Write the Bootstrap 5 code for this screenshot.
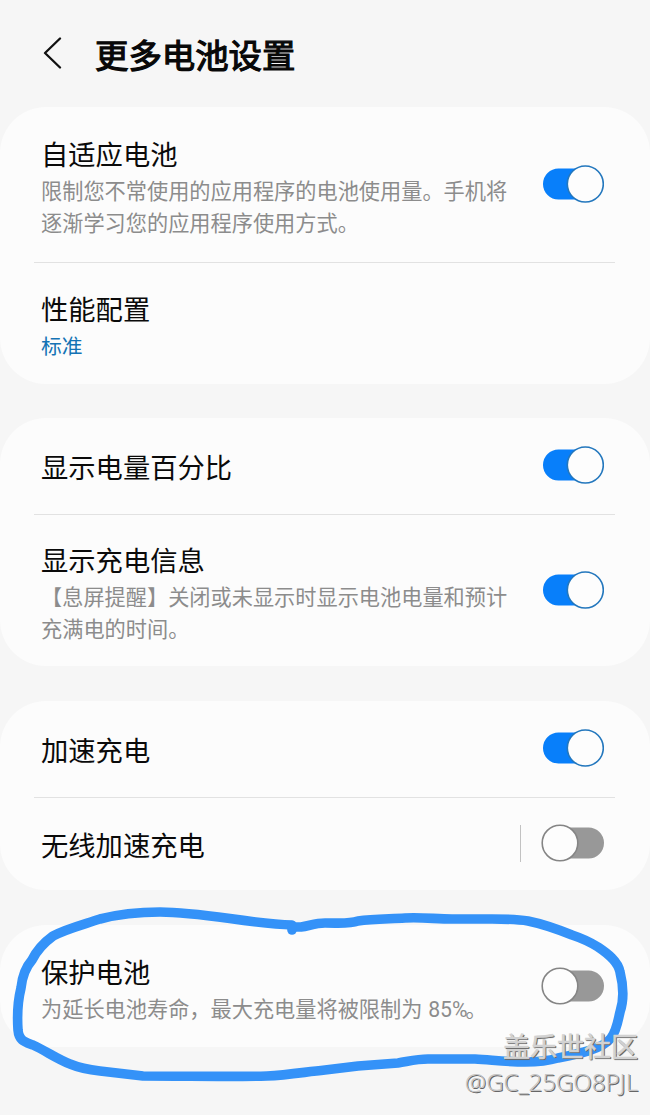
<!DOCTYPE html>
<html lang="zh-CN">
<head>
<meta charset="utf-8">
<meta name="viewport" content="width=device-width, initial-scale=1">
<title>更多电池设置</title>
<link href="https://cdn.jsdelivr.net/npm/bootstrap@5.3.0/dist/css/bootstrap.min.css" rel="stylesheet">
<style>
body { background: #f6f6f6; font-family: "Noto Sans CJK SC", sans-serif; color: #0a0a0a; }
.screen { width: 650px; height: 1115px; }
.topbar { height: 107px; padding: 0 0 0 42px; }
.topbar h1 { font-size: 33.4px; line-height: 44px; font-weight: 400; -webkit-text-stroke: 1.2px #080808; margin: 0 0 0 32px; color: #080808; }
.group { --bs-card-bg: #fcfcfc; --bs-card-border-width: 0; --bs-card-border-radius: 46px; color: inherit; margin-bottom: 35px; }
.group-first { margin-bottom: 34px; }
.setting { padding: 27px 46px 24px 41px; }
.setting .toggle { margin-top: -5px; }
.setting-single { padding-top: 0; padding-bottom: 0; height: 96px; }
.setting-single .toggle { margin-top: -2px; }
.setting-last { padding-top: 29px; padding-bottom: 22px; }
.rule { height: 1px; margin: 0 35px 0 34px; background: #e2e2e2; }
.name { font-size: 27.3px; line-height: 36px; font-weight: 400; margin: 0; }
.note { font-size: 21.2px; line-height: 32px; margin: 3px 0 0; color: #8c8c8c; white-space: nowrap; }
.note-value { color: #1473b5; font-size: 20.8px; }
.latin { font-family: Roboto, sans-serif; margin: 0 -2px 0 1px; }
.toggle { width: 63px; height: 38px; }
.split { width: 1px; height: 37px; background: #c2c2c2; margin: -2px 20px 0 0; }
.pen { left: 0; top: 895px; pointer-events: none; }
.stamp { right: 12px; top: 1028px; line-height: 36px; color: #d2d2d2; text-shadow: 1px 1px 0 #666, 1px 1px 1px #777; }
.stamp-site { font-size: 27px; font-weight: 400; -webkit-text-stroke: .6px #d2d2d2; }
.stamp-user { font-family: "Noto Sans", sans-serif; font-weight: 300; font-size: 24px; line-height: 35px; color: #c4c4c4; text-shadow: 1px 1px 0 #666; }
</style>
</head>
<body>
<svg width="0" height="0" class="position-absolute">
  <symbol id="on" viewBox="0 0 63 38"><rect x="2" y="3.5" width="60" height="31" rx="15.5" fill="#087ffa"/><circle cx="44.3" cy="19" r="18" fill="#fdfdfd" stroke="#2377bd" stroke-width="1.6"/></symbol>
  <symbol id="off" viewBox="0 0 63 38"><rect x="3" y="3.5" width="60" height="31" rx="15.5" fill="#989898"/><circle cx="19" cy="19" r="17.8" fill="#fdfdfd" stroke="#858585" stroke-width="1.6"/></symbol>
</svg>
<main class="screen position-relative overflow-hidden">
  <header class="topbar d-flex align-items-center">
    <svg width="21" height="34" viewBox="0 0 21 34" fill="none" stroke="#111" stroke-width="2.3" stroke-linecap="round" stroke-linejoin="round"><path d="M18 1.5 3 16l15 14.5"/></svg>
    <h1>更多电池设置</h1>
  </header>

  <section class="card group group-first">
    <div class="setting d-flex align-items-center justify-content-between" style="height:155px">
      <div><h2 class="name">自适应电池</h2><p class="note">限制您不常使用的应用程序的电池使用量。手机将<br>逐渐学习您的应用程序使用方式。</p></div>
      <svg class="toggle flex-shrink-0"><use href="#on"/></svg>
    </div>
    <div class="rule"></div>
    <div class="setting" style="height:121px"><h2 class="name">性能配置</h2><p class="note note-value">标准</p></div>
  </section>

  <section class="card group">
    <div class="setting setting-single d-flex align-items-center justify-content-between">
      <h2 class="name">显示电量百分比</h2>
      <svg class="toggle flex-shrink-0"><use href="#on"/></svg>
    </div>
    <div class="rule"></div>
    <div class="setting d-flex align-items-center justify-content-between" style="height:151px">
      <div><h2 class="name">显示充电信息</h2><p class="note">【息屏提醒】关闭或未显示时显示电池电量和预计<br>充满电的时间。</p></div>
      <svg class="toggle flex-shrink-0"><use href="#on"/></svg>
    </div>
  </section>

  <section class="card group">
    <div class="setting setting-single d-flex align-items-center justify-content-between">
      <h2 class="name">加速充电</h2>
      <svg class="toggle flex-shrink-0"><use href="#on"/></svg>
    </div>
    <div class="rule"></div>
    <div class="setting setting-single d-flex align-items-center" style="height:92px">
      <h2 class="name me-auto">无线加速充电</h2>
      <span class="split"></span>
      <svg class="toggle flex-shrink-0"><use href="#off"/></svg>
    </div>
  </section>

  <section class="card group mb-0">
    <div class="setting setting-last d-flex align-items-center justify-content-between" style="height:122px">
      <div><h2 class="name">保护电池</h2><p class="note">为延长电池寿命，最大充电量将被限制为 <span class="latin">85%</span>。</p></div>
      <svg class="toggle flex-shrink-0" style="margin-top:-7px"><use href="#off"/></svg>
    </div>
  </section>

  <svg class="pen position-absolute" width="650" height="200" viewBox="0 895 650 200" fill="none" stroke="#3492f8" stroke-width="9.6" stroke-linecap="round" stroke-linejoin="round">
    <path d="M292 925C250 924 203 912 160 912C138 912 119 914 100 919C82 925 66 929 53 936C42 944 36 952 32 960C25 968 22 978 21 988C18 1000 17 1015 18 1030C19 1041 25 1042 33 1045C46 1051 57 1059 70 1064C82 1069 91 1070 100 1071L143 1076C190 1076 230 1077 267 1076C288 1075 305 1072 325 1070L358 1066L398 1063C410 1061 417 1059 428 1059H475C492 1060 508 1062 525 1062C538 1062 548 1061 558 1058C578 1054 603 1049 611 1038C617 1030 618 1020 620 1012C624 1000 623 984 620 972C618 961 607 953 598 947C590 942 581 938 572 935C557 929 543 924 528 921C516 919 504 919 492 919H452C436 919 421 917 405 918C390 919 373 919 358 921C350 924 342 923 325 923C315 923 309 926 301 927H292"/>
    <path d="M292 926V930"/>
  </svg>

  <div class="stamp position-absolute text-end">
    <div class="stamp-site">盖乐世社区</div>
    <div class="stamp-user">@GC_25GO8PJL</div>
  </div>
</main>
<script src="https://cdn.jsdelivr.net/npm/bootstrap@5.3.0/dist/js/bootstrap.bundle.min.js"></script>
</body>
</html>
